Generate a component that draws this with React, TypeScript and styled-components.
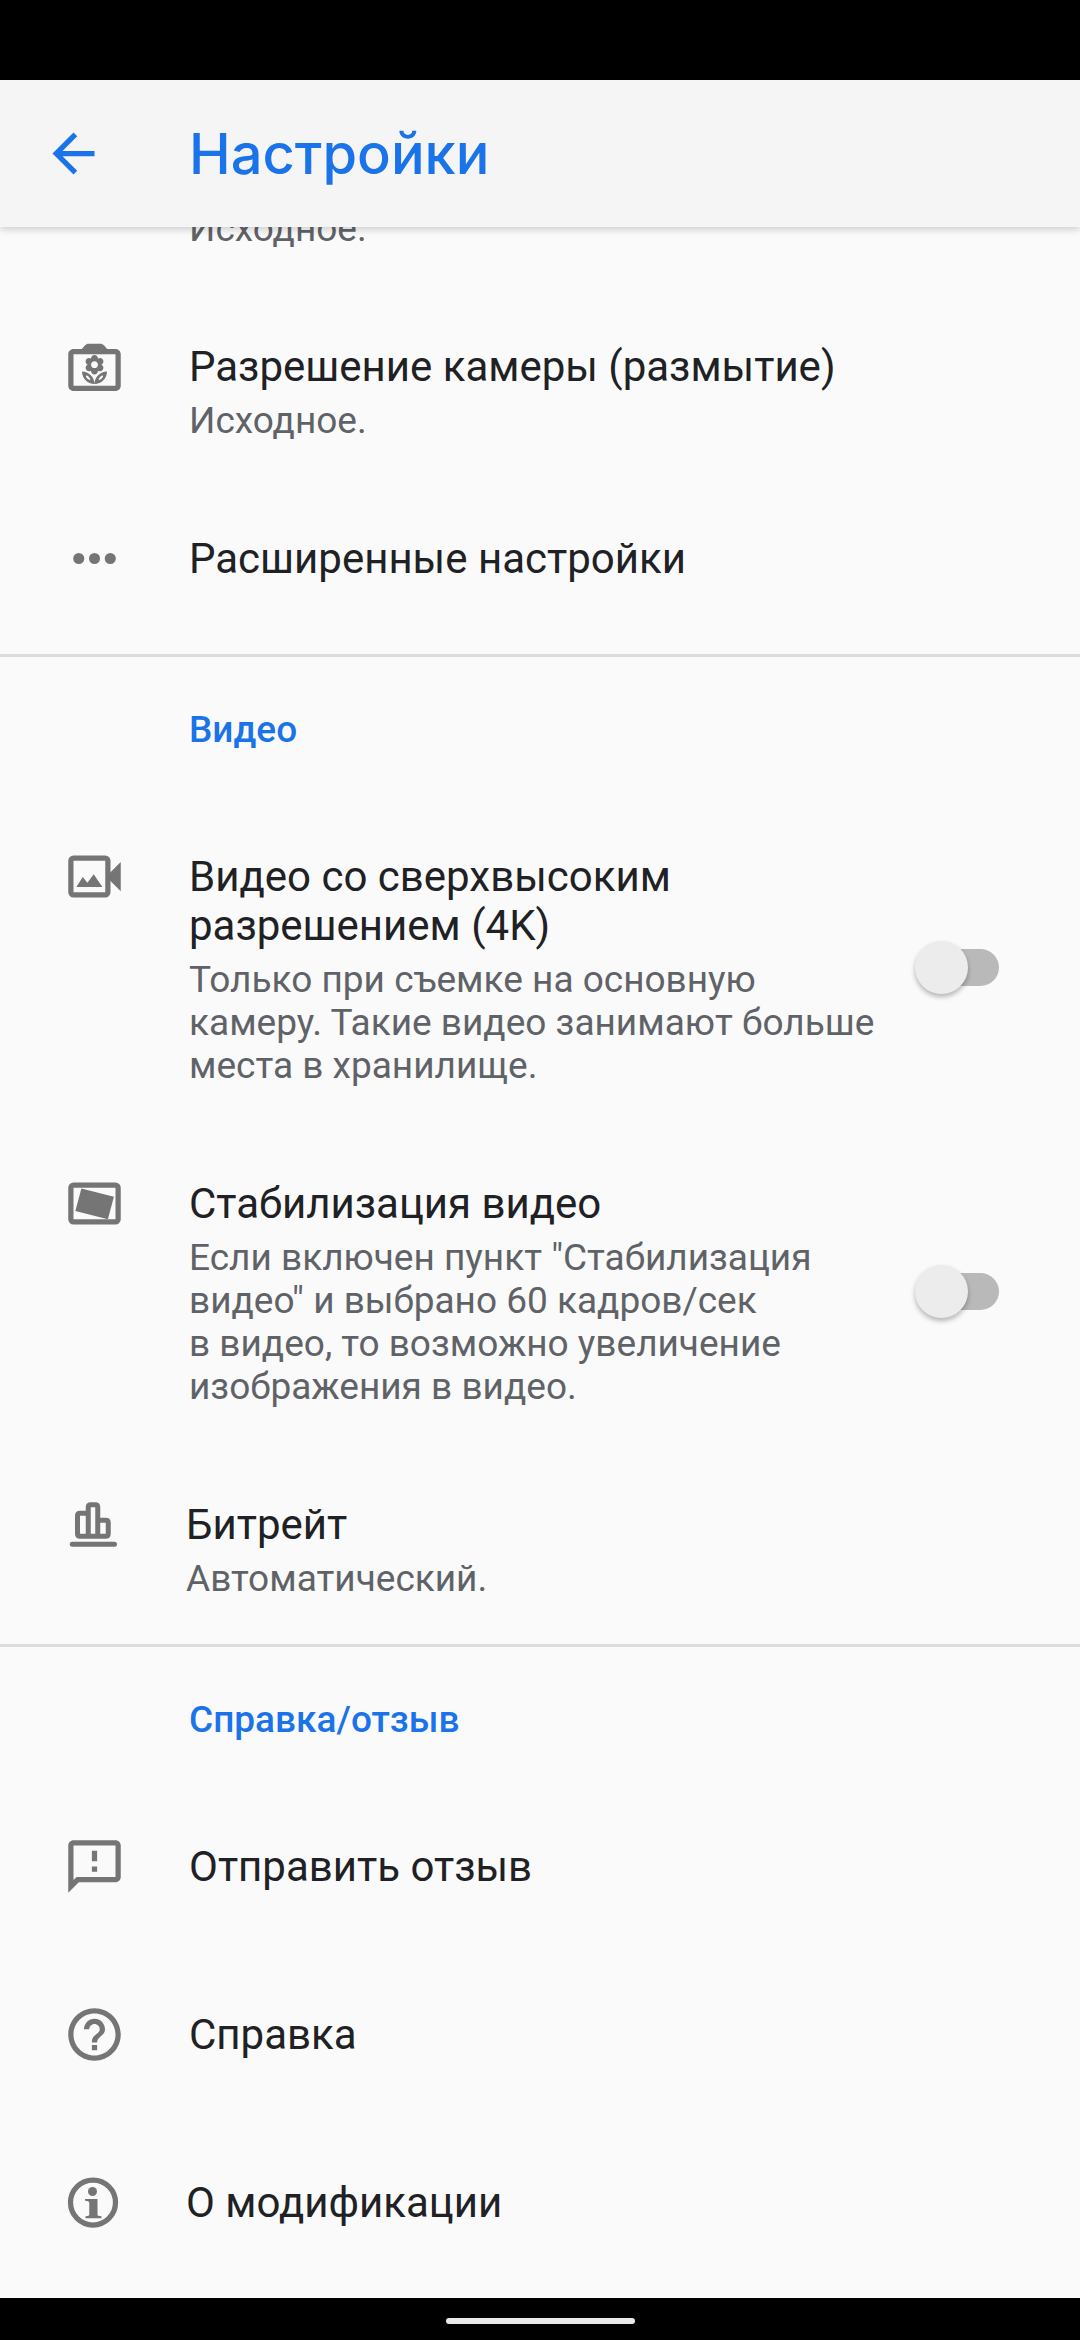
import React, { useId } from "react";
import styled, { createGlobalStyle } from "styled-components";

const GlobalStyle = createGlobalStyle`
  *, *::before, *::after { box-sizing: border-box; }
  body {
    margin: 0;
    background: #fafafa;
    color: #202124;
    font-family: Roboto, "Noto Sans", sans-serif;
  }
  h1, h2, p, ul { margin: 0; padding: 0; }
`;

const Screen = styled.div`
  display: flex;
  flex-direction: column;
  min-height: 100vh;
  background: #fafafa;
`;

const TopArea = styled.div`
  position: relative;
  z-index: 1;
  box-shadow: 0 2px 8px rgba(0, 0, 0, 0.2);
`;

const StatusBar = styled.div`
  height: 80px;
  background: #000;
`;

const AppBar = styled.header`
  display: flex;
  align-items: center;
  gap: 84px;
  height: 147px;
  padding: 0 42px;
  background: #f5f5f5;
`;

const BackButton = styled.button`
  display: flex;
  padding: 0;
  border: 0;
  background: none;
  color: #1a73e8;
`;

const Title = styled.h1`
  color: #1a73e8;
  font: 500 56px/66px Inter, Roboto, sans-serif;
`;

const Content = styled.main`
  flex: 1;
  margin-top: -20px;
`;

const Section = styled.section`
  & + & {
    border-top: 3px solid #dcdcdc;
  }
`;

const SectionTitle = styled.h2`
  padding: 49px 63px 50px 189px;
  color: #1a73e8;
  font: 500 37px/48px Roboto, sans-serif;
`;

const List = styled.ul<{ $gap?: number; $end: number }>`
  display: flex;
  flex-direction: column;
  gap: ${(p) => p.$gap ?? 0}px;
  padding-bottom: ${(p) => p.$end}px;
  list-style: none;
`;

const Row = styled.li`
  display: flex;
  padding: 48px 81px 44px 63px;
`;

const ClippedRow = styled.li`
  padding: 0 63px 44px 189px;
`;

const IconSlot = styled.span`
  display: flex;
  flex: none;
  align-items: center;
  height: 49px;
  margin-right: 63px;
  color: #757575;
`;

const Texts = styled.div`
  flex: 1;
  display: flex;
  flex-direction: column;
  gap: 8px;
`;

const Name = styled.label`
  font-size: 42px;
  line-height: 49px;
`;

const NameLink = styled.a`
  color: inherit;
  font-size: 42px;
  line-height: 49px;
  text-decoration: none;
`;

const Note = styled.p`
  color: #5f6368;
  font-size: 37px;
  line-height: 43px;
`;

const Switch = styled.input`
  appearance: none;
  display: flex;
  flex: none;
  align-items: center;
  align-self: center;
  width: 84px;
  height: 53px;
  margin: 0 0 4px 24px;

  &::before {
    content: "";
    width: 53px;
    height: 53px;
    border-radius: 50%;
    background: #ececec;
    box-shadow: 0 3px 5px rgba(0, 0, 0, 0.28);
    z-index: 1;
  }

  &::after {
    content: "";
    width: 63px;
    height: 37px;
    margin-left: -32px;
    border-radius: 19px;
    background: #b9b9b9;
  }

  &:checked::before {
    background: #1a73e8;
    order: 1;
    margin-left: -32px;
  }

  &:checked::after {
    background: #a3c7f7;
    margin-left: 0;
  }
`;

const NavBar = styled.footer`
  display: flex;
  align-items: center;
  justify-content: center;
  height: 42px;
  padding-top: 4px;
  background: #000;
`;

const HomeHandle = styled.span`
  width: 189px;
  height: 6px;
  border-radius: 3px;
  background: #ebe8ec;
`;

function Icon({ size = 63, children }: { size?: number; children: React.ReactNode }) {
  return (
    <svg width={size} height={size} viewBox="0 0 24 24" fill="currentColor" aria-hidden="true">
      {children}
    </svg>
  );
}

const arrow = <path d="M20 11H7.83l5.59-5.59L12 4l-8 8 8 8 1.41-1.41L7.83 13H20v-2z" />;

const flowerCamera = (
  <g transform="translate(0 1.3)">
    <path d="M20 4h-3.2L15.6 2.6C15.2 2.2 14.8 2 14.3 2H9.7c-.5 0-.9.2-1.3.6L7.2 4H4c-1.1 0-2 .9-2 2v12c0 1.1.9 2 2 2h16c1.1 0 2-.9 2-2V6c0-1.1-.9-2-2-2zm0 14H4V6h16v12z" />
    <g transform="translate(5.64 5.75) scale(.53)">
      <path d="M12 22c4.97 0 9-4.03 9-9-4.97 0-9 4.03-9 9zM5.6 10.25c0 1.38 1.12 2.5 2.5 2.5.53 0 1.01-.16 1.42-.44l-.02.19c0 1.38 1.12 2.5 2.5 2.5s2.5-1.12 2.5-2.5l-.02-.19c.4.28.89.44 1.42.44 1.38 0 2.5-1.12 2.5-2.5 0-1-.59-1.85-1.43-2.25.84-.4 1.43-1.25 1.43-2.25 0-1.38-1.12-2.5-2.5-2.5-.53 0-1.01.16-1.42.44l.02-.19C14.5 2.12 13.38 1 12 1S9.5 2.12 9.5 3.5l.02.19c-.4-.28-.89-.44-1.42-.44-1.38 0-2.5 1.12-2.5 2.5 0 1 .59 1.85 1.43 2.25-.84.4-1.43 1.25-1.43 2.25zM12 5.5c1.38 0 2.5 1.12 2.5 2.5s-1.12 2.5-2.5 2.5S9.5 9.38 9.5 8s1.12-2.5 2.5-2.5zM3 13c0 4.97 4.03 9 9 9 0-4.97-4.03-9-9-9z" />
      <g fill="#fafafa">
        <ellipse cx="16.6" cy="17.4" rx="2.1" ry=".8" transform="rotate(-45 16.6 17.4)" />
        <ellipse cx="7.4" cy="17.4" rx="2.1" ry=".8" transform="rotate(45 7.4 17.4)" />
      </g>
    </g>
  </g>
);

const dots = (
  <>
    <circle cx="6" cy="12" r="2.1" />
    <circle cx="12" cy="12" r="2.1" />
    <circle cx="18" cy="12" r="2.1" />
  </>
);

const videoFrame = (
  <>
    <rect x="3" y="5" width="14.1" height="14" rx="1" fill="none" stroke="currentColor" strokeWidth="2" />
    <path d="M22 6.5l-4.2 4.2v2.7L22 17.6zM5.1 16l2.4-3.8 1.8 2.2 2.4-3.3L15 16z" />
  </>
);

const tiltedFrame = (
  <>
    <rect x="3" y="5" width="18" height="14" rx="1" fill="none" stroke="currentColor" strokeWidth="2" />
    <path d="M7 6.3l12.4 3.1-2.3 8.6-12.4-3.1z" />
  </>
);

const bars = (
  <g fill="none" stroke="currentColor" strokeWidth="2" strokeLinecap="round" strokeLinejoin="round">
    <path d="M10.1 16.5V4.9q0-1 1-1h1.8q1 0 1 1v11.6M10.1 7.3H6.8q-1 0-1 1v7.2q0 1 1 1h10.3q1 0 1-1v-4.4q0-1-1-1h-3.2M3.7 19.7h16.9" />
  </g>
);

const feedback = (
  <path d="M20 2H4c-1.1 0-1.99.9-1.99 2L2 22l4-4h14c1.1 0 2-.9 2-2V4c0-1.1-.9-2-2-2zm0 14H5.17L4 17.17V4h16v12zm-9-4h2v2h-2zm0-6h2v4h-2z" />
);

const help = (
  <path d="M11 18h2v-2h-2v2zm1-16C6.48 2 2 6.48 2 12s4.48 10 10 10 10-4.48 10-10S17.52 2 12 2zm0 18c-4.41 0-8-3.59-8-8s3.59-8 8-8 8 3.59 8 8-3.59 8-8 8zm0-14c-2.21 0-4 1.79-4 4h2c0-1.1.9-2 2-2s2 .9 2 2c0 2-3 1.75-3 5h2c0-2.25 3-2.5 3-5 0-2.21-1.79-4-4-4z" />
);

const info = (
  <>
    <circle cx="12" cy="11.8" r="9" fill="none" stroke="currentColor" strokeWidth="2.1" />
    <circle cx="11.8" cy="7.4" r="1.8" />
    <path d="M8.8 10.4h5v6.2c0 .5.3.6 1.6.7v.8H9v-.8c1.2-.1 1.5-.2 1.5-.7v-4.7c0-.5-.4-.7-1.7-.8z" />
  </>
);

interface SettingProps {
  icon: React.ReactNode;
  iconSize?: number;
  name: string;
  note?: string;
  toggle?: boolean;
}

function Setting({ icon, iconSize, name, note, toggle }: SettingProps) {
  const id = useId();
  return (
    <Row>
      <IconSlot>
        <Icon size={iconSize}>{icon}</Icon>
      </IconSlot>
      <Texts>
        {toggle ? <Name htmlFor={id}>{name}</Name> : <NameLink href="#">{name}</NameLink>}
        {note && <Note>{note}</Note>}
      </Texts>
      {toggle && <Switch id={id} type="checkbox" role="switch" />}
    </Row>
  );
}

export default function App() {
  return (
    <Screen>
      <GlobalStyle />
      <TopArea>
        <StatusBar />
        <AppBar>
          <BackButton aria-label="Назад">
            <Icon>{arrow}</Icon>
          </BackButton>
          <Title>Настройки</Title>
        </AppBar>
      </TopArea>
      <Content>
        <Section>
          <List $end={27}>
            <ClippedRow>
              <Note>Исходное.</Note>
            </ClippedRow>
            <Setting icon={flowerCamera} name="Разрешение камеры (размытие)" note="Исходное." />
            <Setting icon={dots} name="Расширенные настройки" />
          </List>
        </Section>
        <Section>
          <SectionTitle>Видео</SectionTitle>
          <List $end={0}>
            <Setting
              icon={videoFrame}
              name="Видео со сверхвысоким разрешением (4K)"
              note="Только при съемке на основную камеру. Такие видео занимают больше места в хранилище."
              toggle
            />
            <Setting
              icon={tiltedFrame}
              name="Стабилизация видео"
              note={
                'Если включен пункт "Стабилизация видео" и выбрано 60 кадров/сек в\u00a0видео, то возможно увеличение изображения в\u00a0видео.'
              }
              toggle
            />
            <Setting icon={bars} iconSize={60} name="Битрейт" note="Автоматический." />
          </List>
        </Section>
        <Section>
          <SectionTitle>Справка/отзыв</SectionTitle>
          <List $gap={27} $end={0}>
            <Setting icon={feedback} name="Отправить отзыв" />
            <Setting icon={help} name="Справка" />
            <Setting icon={info} iconSize={60} name="О модификации" />
          </List>
        </Section>
      </Content>
      <NavBar>
        <HomeHandle />
      </NavBar>
    </Screen>
  );
}
